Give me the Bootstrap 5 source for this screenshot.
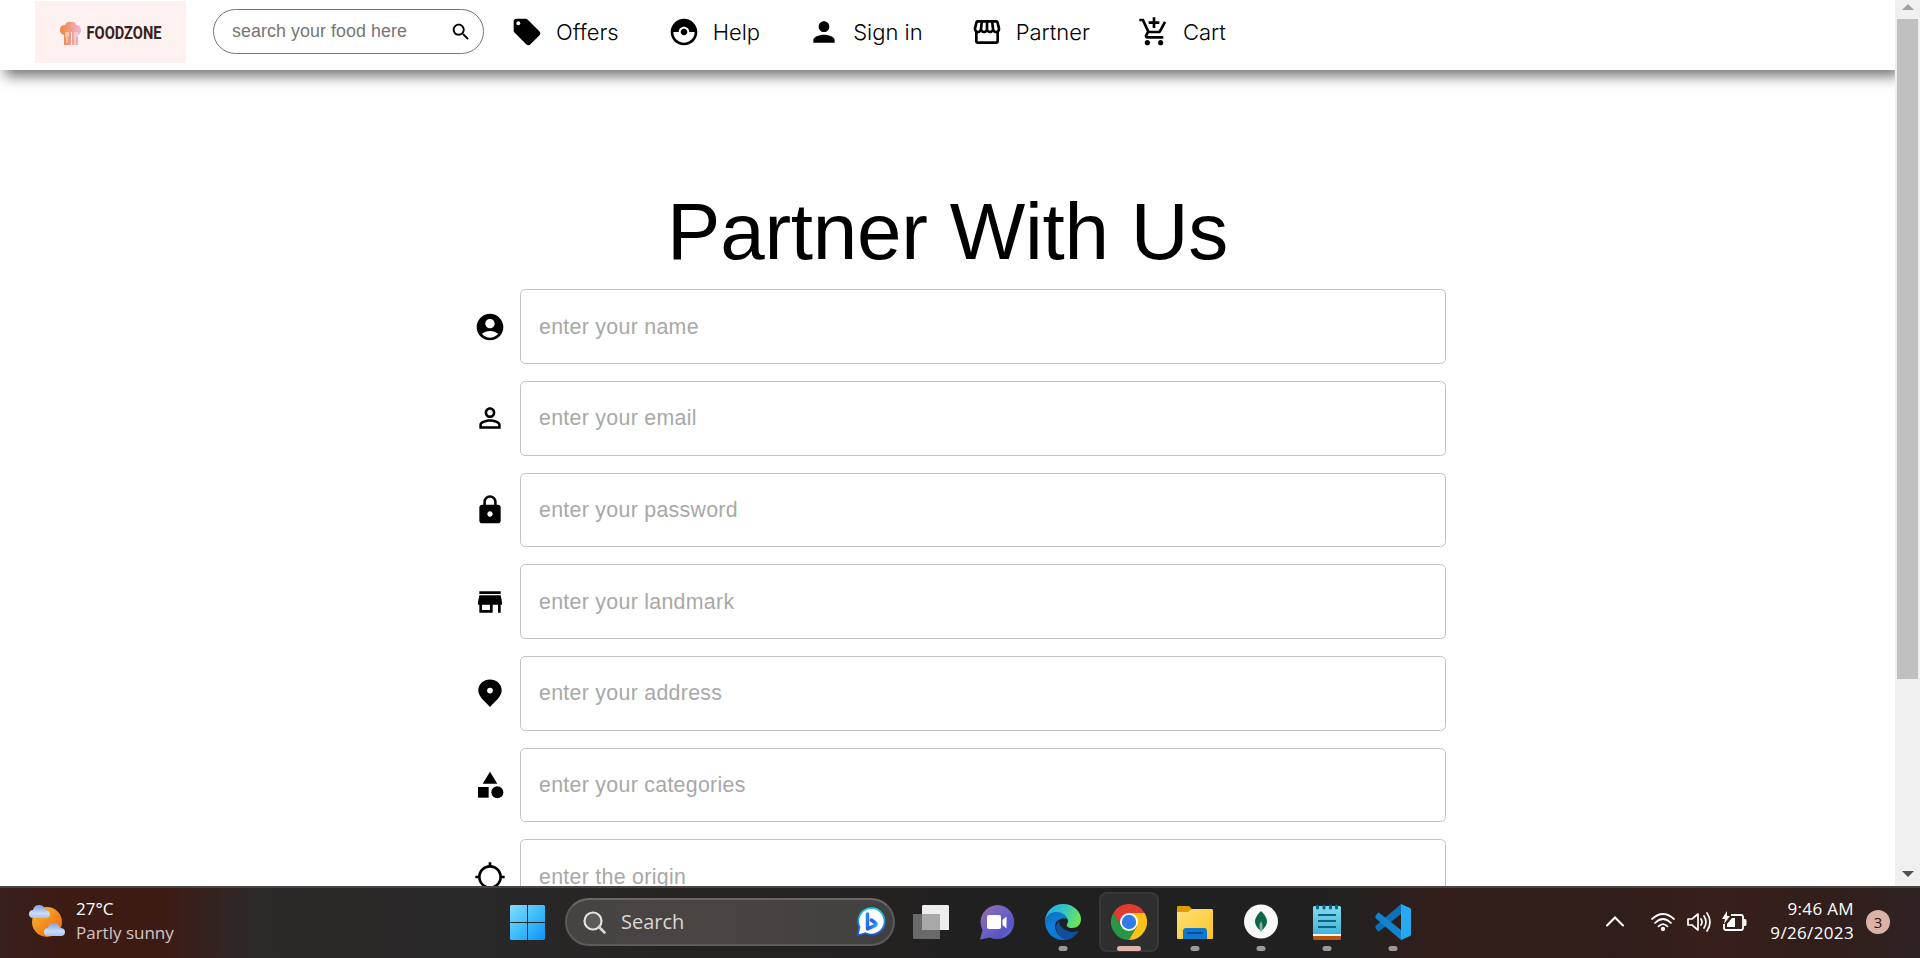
<!DOCTYPE html>
<html lang="en">
<head>
<meta charset="utf-8">
<meta name="viewport" content="width=device-width, initial-scale=1">
<title>FoodZone - Partner With Us</title>
<link href="https://cdn.jsdelivr.net/npm/bootstrap@5.3.0/dist/css/bootstrap.min.css" rel="stylesheet">
<style>
  body { font-family: "Liberation Sans", Arial, sans-serif; color: #000; background: #fff; height: 958px; }
  svg { display: block; flex: none; }
  .viewport-row { height: 886px; }
  .topbar { height: 70px; padding: 0 0 0 35px; box-shadow: 5px 6px 13px 0 #707070; background: #fff; }
  .brand-box { width: 151px; height: 62px; margin-top: 1px; background: #fdf2f0; }
  .food-search { width: 271px; height: 45px; margin: 9px 0 0 27px; border: 1px solid #767676; border-radius: 23px; padding: 0 11px 0 18px; }
  .food-search input { font-size: 17.78px; letter-spacing: .1px; line-height: 20px; color: #000; width: 200px; padding: 0 0 2px; outline: 0; }
  .food-search input::placeholder { color: #757575; opacity: 1; }
  .mainlink { height: 32px; margin: 16px 0 0 48px; color: #000; font: 300 22px/32px Inter, sans-serif; gap: 13px; text-decoration: none; }
  .food-search + .mainlink { margin-left: 27px; }
  .food-search + .mainlink + .mainlink { margin-left: 49px; }
  .mainlink svg, .field-row > svg { width: 32px; height: 32px; }
  .page-title { font-size: 80px; letter-spacing: -.25px; line-height: 96px; font-weight: 400; margin: 113.5px 0 9.85px; }
  .field-row { gap: 14px; margin-bottom: 17px; height: 74.67px; }
  .partner-form { width: 972px; margin-left: 474px; }
  .field-row .form-control { height: 100%; border: 1px solid #c0c0c0; border-radius: 5.33px; padding: 1px 18px 0; font-size: 21.33px; letter-spacing: .3px; }
  .field-row .form-control::placeholder { color: #a8a8a8; opacity: 1; }
  .scroll-track { width: 25px; background: #f0f0f0; padding: 4px 0 9px; }
  .scroll-thumb { width: 21px; height: 660px; background: #c0c0c0; margin-top: 9px; }
  .taskbar { height: 72px; padding-bottom: 2px; border-top: 2px solid #4b4342; font-family: "Open Sans", "Noto Sans", sans-serif; color: #fff;
    background: linear-gradient(90deg, #38201c 0, #3d1b15 60px, #3d1b15 165px, #2c2a29 255px, #292828 480px, #252322 700px, #212020 1000px, #222120 1350px, #321d1a 1440px, #301d1b 1620px, #381f1a 1710px, #311e1b 1820px, #2f2322 1920px); }
  .weather { width: 510px; padding: 0 0 2px 28px; gap: 11px; }
  .weather, .clock { font-size: 17px; line-height: 24px; }
  .weather .sky { color: #d2c6c4; }
  .task-search { width: 330px; height: 48px; margin-left: 20px; border: 2px solid #5d5a59; border-top-color: #6b6867; border-radius: 24px; background: linear-gradient(90deg, #454443, #4a4543 40%, #414040); padding: 0 7px 0 16px; font-size: 20px; color: #d8d6d5; }
  .task-apps { margin-left: 3px; }
  .task-app { width: 66px; height: 70px; }
  .task-app.active-app::before { content: ""; position: absolute; left: 3px; top: 5px; width: 60px; height: 60px; background: #2f2e2e; border: 2px solid #393838; border-radius: 8px; }
  .task-app svg { position: relative; }
  .run-dot { position: absolute; bottom: 6px; left: 50%; transform: translateX(-50%); width: 9px; height: 5px; border-radius: 3px; background: #9b9999; }
  .active-app .run-dot { width: 24px; background: #dfb3a8; }
  .tray { margin-left: auto; padding-right: 30px; }
  .clock { width: 107px; letter-spacing: .35px; padding-bottom: 2px; }
  .note-count { width: 24px; height: 24px; background: #dcb2a6; color: #201614; font-size: 15px; margin-left: 12px; }
</style>
</head>
<body class="overflow-hidden d-flex flex-column">
<div class="viewport-row d-flex flex-shrink-0 overflow-hidden">
  <div class="flex-grow-1 overflow-hidden">
    <nav class="topbar d-flex align-items-start">
      <a href="#" class="brand-box d-block" aria-label="Foodzone">
        <svg width="151" height="62" viewBox="0 0 151 62">
          <defs><linearGradient id="cap" x1="0" x2="1"><stop offset="0" stop-color="#ee8534"/><stop offset=".45" stop-color="#f09a80"/><stop offset="1" stop-color="#f0b6de"/></linearGradient></defs>
          <path fill="url(#cap)" d="M29 31q-4-1-4-5 0-5 5-5 2-4 6-3 4-1 5 3 5 0 5 5 0 4-3 5v10H29z" transform="translate(0 3)"/>
          <path d="M31 31v4q0 2 1 2v5M33 31v5M36.500 31v13M40 31v13M42 31v5" stroke="#fdebea" stroke-width="1" fill="none"/>
          <text x="51.500" y="38" textLength="75" lengthAdjust="spacingAndGlyphs" font-family="Roboto, sans-serif" font-size="19" font-weight="700" fill="#38201d">FOODZONE</text>
        </svg>
      </a>
      <form class="food-search d-flex align-items-center justify-content-between">
        <input type="text" class="border-0 bg-transparent" placeholder="search your food here">
        <svg width="22" height="22" viewBox="0 0 24 24"><path d="M15.500 14h-.79l-.28-.27C15.410 12.590 16 11.110 16 9.500 16 5.910 13.090 3 9.500 3S3 5.910 3 9.500 5.910 16 9.500 16c1.610 0 3.090-.59 4.230-1.570l.27.28v.79l5 4.990L20.490 19l-4.990-5zm-6 0C7.010 14 5 11.990 5 9.500S7.010 5 9.500 5 14 7.010 14 9.500 11.990 14 9.500 14z"/></svg>
      </form>
      <a href="#" class="mainlink d-flex"><svg viewBox="0 0 24 24"><path d="m21.410 11.580-9-9C12.050 2.220 11.550 2 11 2H4c-1.100 0-2 .9-2 2v7c0 .55.220 1.050.59 1.420l9 9c.36.360.86.580 1.410.58.550 0 1.050-.22 1.410-.59l7-7c.37-.36.590-.86.590-1.410 0-.55-.23-1.060-.59-1.420zM5.500 7C4.670 7 4 6.330 4 5.500S4.670 4 5.500 4 7 4.670 7 5.500 6.330 7 5.500 7z"/></svg>Offers</a>
      <a href="#" class="mainlink d-flex"><svg viewBox="0 0 24 24"><path d="M14.500 12c0 1.380-1.120 2.500-2.500 2.500S9.500 13.380 9.500 12s1.120-2.500 2.500-2.500 2.500 1.120 2.500 2.500zM22 12c0 5.520-4.480 10-10 10S2 17.520 2 12 6.480 2 12 2s10 4.480 10 10zm-2 0h-4c0-2.210-1.790-4-4-4s-4 1.790-4 4H4c0 4.410 3.590 8 8 8s8-3.590 8-8z"/></svg>Help</a>
      <a href="#" class="mainlink d-flex"><svg viewBox="0 0 24 24"><path d="M12 12c2.210 0 4-1.790 4-4s-1.790-4-4-4-4 1.790-4 4 1.790 4 4 4zm0 2c-2.670 0-8 1.340-8 4v2h16v-2c0-2.660-5.330-4-8-4z"/></svg>Sign in</a>
      <a href="#" class="mainlink d-flex"><svg viewBox="0 0 24 24"><path d="m21.900 8.890-1.050-4.370c-.22-.9-1-1.520-1.910-1.520H5.050c-.9 0-1.690.63-1.900 1.520L2.100 8.890c-.24 1.020-.02 2.060.62 2.880.8.110.190.190.280.290V19c0 1.100.9 2 2 2h14c1.100 0 2-.9 2-2v-6.940c.09-.09.200-.18.280-.28.640-.82.870-1.870.62-2.890zm-2.990-3.900 1.050 4.370c.1.420.010.840-.25 1.170-.14.180-.44.470-.94.470-.61 0-1.140-.49-1.210-1.140L16.980 5l1.930-.01zM13 5h1.960l.54 4.520c.5.390-.07.780-.33 1.070-.22.260-.54.410-.95.410-.67 0-1.220-.59-1.220-1.310V5zM8.490 9.520 9.040 5H11v4.690c0 .72-.55 1.310-1.290 1.310-.34 0-.65-.15-.89-.41-.25-.29-.37-.68-.33-1.070zm-4.450-.16L5.050 5h1.970l-.58 4.860c-.08.650-.6 1.140-1.210 1.140-.49 0-.8-.29-.93-.47-.27-.32-.36-.75-.26-1.170zM5 19v-6.030c.8.010.150.030.230.030.87 0 1.660-.36 2.240-.95.600.600 1.400.95 2.310.95.870 0 1.650-.36 2.230-.93.590.570 1.390.93 2.290.93.840 0 1.640-.35 2.240-.95.580.590 1.370.95 2.240.95.080 0 .15-.02.230-.03V19H5z"/></svg>Partner</a>
      <a href="#" class="mainlink d-flex"><svg viewBox="0 0 24 24"><path d="M11 9h2V6h3V4h-3V1h-2v3H8v2h3v3zm-4 9c-1.100 0-1.990.9-1.990 2S5.900 22 7 22s2-.9 2-2-.9-2-2-2zm10 0c-1.100 0-1.990.9-1.990 2s.89 2 1.990 2 2-.9 2-2-.9-2-2-2zm-9.830-3.250.03-.12.900-1.630h7.450c.75 0 1.410-.41 1.750-1.030l3.860-7.010L19.420 4h-.01l-1.100 2-2.760 5H8.530l-.13-.27L6.160 6l-.95-2-.94-2H1v2h2l3.600 7.590-1.350 2.450c-.16.280-.25.610-.25.960 0 1.100.9 2 2 2h12v-2H7.420c-.13 0-.25-.11-.25-.25z"/></svg>Cart</a>
    </nav>
    <main>
      <h1 class="page-title text-center">Partner With Us</h1>
      <form class="partner-form">
        <div class="field-row d-flex align-items-center"><svg viewBox="0 0 24 24"><path d="M12 2C6.480 2 2 6.480 2 12s4.480 10 10 10 10-4.480 10-10S17.520 2 12 2zm0 4c1.930 0 3.500 1.570 3.500 3.500S13.930 13 12 13s-3.500-1.570-3.500-3.500S10.070 6 12 6zm0 14c-2.030 0-4.430-.82-6.140-2.880C7.550 15.800 9.680 15 12 15s4.450.8 6.140 2.120C16.430 19.180 14.030 20 12 20z"/></svg><input class="form-control" type="text" placeholder="enter your name"></div>
        <div class="field-row d-flex align-items-center"><svg viewBox="0 0 24 24"><path d="M12 5.900c1.160 0 2.100.94 2.100 2.100s-.94 2.100-2.100 2.100S9.900 9.160 9.900 8s.94-2.100 2.100-2.100m0 9c2.970 0 6.100 1.460 6.100 2.100v1.100H5.900V17c0-.64 3.130-2.100 6.100-2.100M12 4C9.790 4 8 5.790 8 8s1.790 4 4 4 4-1.790 4-4-1.790-4-4-4zm0 9c-2.670 0-8 1.340-8 4v3h16v-3c0-2.660-5.330-4-8-4z"/></svg><input class="form-control" type="text" placeholder="enter your email"></div>
        <div class="field-row d-flex align-items-center"><svg viewBox="0 0 24 24"><path d="M18 8h-1V6c0-2.760-2.240-5-5-5S7 3.240 7 6v2H6c-1.100 0-2 .9-2 2v10c0 1.100.9 2 2 2h12c1.100 0 2-.9 2-2V10c0-1.100-.9-2-2-2zm-6 9c-1.100 0-2-.9-2-2s.9-2 2-2 2 .9 2 2-.9 2-2 2zm3.100-9H8.900V6c0-1.710 1.390-3.100 3.100-3.100 1.710 0 3.100 1.390 3.100 3.100v2z"/></svg><input class="form-control" type="text" placeholder="enter your password"></div>
        <div class="field-row d-flex align-items-center"><svg viewBox="0 0 24 24"><path d="M20 4H4v2h16V4zm1 10v-2l-1-5H4l-1 5v2h1v6h10v-6h4v6h2v-6h1zm-9 4H6v-4h6v4z"/></svg><input class="form-control" type="text" placeholder="enter your landmark"></div>
        <div class="field-row d-flex align-items-center"><svg viewBox="0 0 24 24"><path fill-rule="evenodd" d="M12 2C7.100 2 3 5.600 3 10.400c0 4 3.500 7.100 9 12.600 5.500-5.500 9-8.600 9-12.600C21 5.600 16.900 2 12 2zm0 6.200a2.200 2.200 0 1 1 0 4.400 2.200 2.200 0 0 1 0-4.400z" transform="translate(.3 0) scale(.975)"/></svg><input class="form-control" type="text" placeholder="enter your address"></div>
        <div class="field-row d-flex align-items-center"><svg viewBox="0 0 24 24"><path d="m12 2-5.500 9h11z"/><circle cx="17.500" cy="17.500" r="4.500"/><path d="M3 13.500h8v8H3z"/></svg><input class="form-control" type="text" placeholder="enter your categories"></div>
        <div class="field-row d-flex align-items-center"><svg viewBox="0 0 24 24"><path d="M20.940 11c-.46-4.170-3.770-7.480-7.940-7.940V1h-2v2.060C6.830 3.520 3.520 6.830 3.060 11H1v2h2.060c.46 4.170 3.770 7.480 7.940 7.940V23h2v-2.060c4.170-.46 7.480-3.770 7.940-7.940H23v-2h-2.060zM12 19c-3.870 0-7-3.130-7-7s3.130-7 7-7 7 3.130 7 7-3.130 7-7 7z"/></svg><input class="form-control" type="text" placeholder="enter the origin"></div>
      </form>
    </main>
  </div>
  <div class="scroll-track d-flex flex-column align-items-center flex-shrink-0">
    <svg width="12" height="6" viewBox="0 0 12 6"><path fill="#a0a0a0" d="M6 0l6 6H0z"/></svg>
    <div class="scroll-thumb"></div>
    <svg class="mt-auto" width="12" height="6" viewBox="0 0 12 6"><path fill="#505050" d="M6 6l6-6H0z"/></svg>
  </div>
</div>

<footer class="taskbar d-flex align-items-center flex-shrink-0">
  <div class="weather d-flex align-items-center">
    <svg width="37" height="35" viewBox="0 0 37 35">
      <defs><linearGradient id="sun" x1="0" y1="0" x2="1" y2="1"><stop offset=".1" stop-color="#f2b32c"/><stop offset=".85" stop-color="#f26d0f"/></linearGradient><linearGradient id="cloud" x1="0" y1="0" x2="0" y2="1"><stop offset="0" stop-color="#7fa0df"/><stop offset=".65" stop-color="#c9dcfa"/><stop offset="1" stop-color="#a8c2ef"/></linearGradient></defs>
      <circle cx="19" cy="18" r="15" fill="url(#sun)"/>
      <path fill="url(#cloud)" d="M5 14Q1 14 1 10q0-4 4-4 1-5 6-5 5 0 6 5 5 0 5 4 0 4-4 4z"/>
      <path fill="url(#cloud)" d="M20 32q-4 0-4-4 0-4 4-4 1-5 6-5 5 0 6 5 5 0 5 4 0 4-4 4z"/>
    </svg>
    <div><div>27°C</div><div class="sky">Partly sunny</div></div>
  </div>
  <svg width="35" height="35" viewBox="0 0 35 35"><defs><linearGradient id="win" x1="0" y1="0" x2="1" y2="1"><stop offset="0" stop-color="#84dcff"/><stop offset=".5" stop-color="#3fbdf8"/><stop offset="1" stop-color="#0c93f7"/></linearGradient></defs><path fill="url(#win)" d="M1 0h16v17H0V1zM18 0h16l1 1v16H18zM0 18h17v17H1l-1-1zM18 18h17v16l-1 1H18z"/></svg>
  <div class="task-search d-flex align-items-center">
    <svg width="23" height="23" viewBox="0 0 23 23"><circle cx="10" cy="10" r="8.500" fill="#5d5b5a" stroke="#e3e2e2" stroke-width="2.200"/><path d="M16 16l5.500 5.500" stroke="#d8d8d8" stroke-width="2.600" stroke-linecap="round"/></svg>
    <span style="margin-left:15px">Search</span>
    <svg class="ms-auto" width="30" height="30" viewBox="0 0 30 30"><defs><linearGradient id="bg" x1="0" y1="0" x2="0" y2="1"><stop offset="0" stop-color="#22cbe8"/><stop offset="1" stop-color="#1b51d0"/></linearGradient><linearGradient id="bb" x1="0" y1="0" x2="1" y2="1"><stop offset="0" stop-color="#2387f0"/><stop offset=".6" stop-color="#2560e8"/><stop offset="1" stop-color="#2ad0e0"/></linearGradient></defs><path d="M15.500 1.200a13.200 13.200 0 1 1-6 25L1.500 28.500 3.500 20A13.200 13.200 0 0 1 15.500 1.200z" fill="#fff" stroke="url(#bg)" stroke-width="1.800"/><path d="M11.500 7v15l8-3.600q1.500-1.400-.4-2.700L15.300 13" fill="none" stroke="url(#bb)" stroke-width="3.500" stroke-linejoin="round" stroke-linecap="round"/></svg>
  </div>
  <div class="task-apps d-flex">
    <div class="task-app position-relative d-flex align-items-center justify-content-center"><svg width="36" height="34" viewBox="0 0 36 34"><path fill="#ededed" d="M10 0h25l1 1v24H9V1z"/><path fill="#6a6969" d="M0 9h27v25H1l-1-1z"/><path fill="#a9a8a8" d="M9 9h18v16H9z"/></svg></div>
    <div class="task-app position-relative d-flex align-items-center justify-content-center"><svg width="35" height="35" viewBox="1 1 35 35"><defs><linearGradient id="chat" x1="0" y1="0" x2="1" y2="1"><stop offset="0" stop-color="#9d6ba8"/><stop offset=".45" stop-color="#6f62c4"/><stop offset=".75" stop-color="#5754c7"/><stop offset="1" stop-color="#6c7cea"/></linearGradient></defs><path fill="url(#chat)" d="M18 1a17 17 0 1 1-7 32.400L1 35.500 3.500 26A17 17 0 0 1 18 1z"/><rect x="8" y="11" width="14" height="14" rx="2" fill="#fff"/><path fill="#fff" d="M23.500 16l4-3.500v12l-4-3.500z"/></svg></div>
    <div class="task-app position-relative d-flex align-items-center justify-content-center"><svg width="36" height="36" viewBox="0 0 36 36"><defs><linearGradient id="e1" x1="0" y1=".2" x2="1" y2=".5"><stop offset="0" stop-color="#2aa9e8"/><stop offset=".5" stop-color="#31c7c4"/><stop offset="1" stop-color="#6fe357"/></linearGradient><linearGradient id="e2" x1="0" y1="0" x2=".5" y2="1"><stop offset="0" stop-color="#1266b2"/><stop offset=".5" stop-color="#0c82dc"/><stop offset="1" stop-color="#0f76cd"/></linearGradient></defs><path fill="url(#e1)" d="M0 17C1 6 9 0 18 0c11 0 18 8 18 15 0 6-4 9-9 9-4 0-6-2-5-4 2-2 1-6-2-8C13 8 4 9 0 17z"/><path fill="#11509e" d="M14 17c-3 3-3 6-3 7 1 7 7 12 11 12 5-1 9-5 12-9-2 0-6 2-11 0-6-2-9-6-9-10z"/><path fill="url(#e2)" d="M0 17C2 9 8 8 12 8c5 0 9 3 10 7-3-2-12 0-12 7 0 6 5 12 11 14-2 0-3 0-3 0C8 36 0 28 0 17z"/></svg><i class="run-dot"></i></div>
    <div class="task-app active-app position-relative d-flex align-items-center justify-content-center"><svg width="36" height="36" viewBox="0 0 36 36"><path fill="#e23b2f" d="M18 18V9h15.600A18 18 0 0 0 2.400 9l7.800 13.500z"/><path fill="#2a9746" d="M18 18l7.800 4.500L18 36A18 18 0 0 1 2.400 9l7.800 13.500z"/><path fill="#fbc116" d="M18 9h15.600A18 18 0 0 1 18 36l7.800-13.500z"/><circle cx="18" cy="18" r="9" fill="#fff"/><circle cx="18" cy="18" r="7.200" fill="#2f7bea"/></svg><i class="run-dot"></i></div>
    <div class="task-app position-relative d-flex align-items-center justify-content-center"><svg width="36" height="34" viewBox="0 0 36 34"><defs><linearGradient id="fold" x1="0" y1="0" x2="1" y2="1"><stop offset="0" stop-color="#ffe07a"/><stop offset="1" stop-color="#ffc425"/></linearGradient></defs><path fill="#dc9d00" d="M0 8V2q0-1 1-1h11l3 3v5z"/><path fill="url(#fold)" d="M0 7h11l4-3h20l1 1v28q0 1-1 1H1q-1 0-1-1z"/><path fill="#0f79cf" d="M6 34V26q0-3 3-3h18q3 0 3 3v8z"/><path stroke="#0a4d94" stroke-width="2" stroke-linecap="round" d="M11 28h14"/></svg><i class="run-dot"></i></div>
    <div class="task-app position-relative d-flex align-items-center justify-content-center"><svg width="34" height="36" viewBox="0 0 34 36"><circle cx="17" cy="17.500" r="17" fill="#f8f8f8"/><path fill="#0a6847" d="M17 7q12 11 0 20-12-9 0-20z"/><path fill="#8bb5a2" d="M17 17q3 5 0 12-3-7 0-12z"/></svg><i class="run-dot"></i></div>
    <div class="task-app position-relative d-flex align-items-center justify-content-center"><svg width="28" height="36" viewBox="0 0 28 36"><defs><linearGradient id="pad" x1="0" y1="0" x2="0" y2="1"><stop offset="0" stop-color="#81dcee"/><stop offset="1" stop-color="#42b3d6"/></linearGradient></defs><path fill="#b8560c" d="M0 30h28v5l-1 1H1l-1-1z"/><path fill="#f4f4f4" d="M0 28h28v4H0z"/><path fill="url(#pad)" d="M0 3l1-1h26l1 1v27H0z"/><path stroke="#0e6180" stroke-width="2" d="M5 11h18M5 17h18M5 23h18"/><path stroke="#0e6180" stroke-width="3" stroke-linecap="round" d="M4.500 2v2M11 2v2M17.500 2v2M23.500 2v2"/></svg><i class="run-dot"></i></div>
    <div class="task-app position-relative d-flex align-items-center justify-content-center"><svg width="36" height="36" viewBox="0 0 36 36"><path fill="#0a70b8" d="M1 24.500q-1.500-1.500 0-3L26 0v10L4.500 27q-1 1-2 0z"/><path fill="#1183cf" d="M1 11.500q-1.500 1.500 0 3L26 36V26L4.500 9q-1-1-2 0z"/><path fill="#27aaf2" d="M26 0l9 4q1 .5 1 2v24q0 1.500-1 2l-9 4z"/></svg><i class="run-dot"></i></div>
  </div>
  <div class="tray d-flex align-items-center">
    <svg width="18" height="12" viewBox="0 0 18 12" style="margin-right:27px"><path d="M1 9.500l8-8 8 8" fill="none" stroke="#fff" stroke-width="2" stroke-linecap="round"/></svg>
    <svg width="24" height="20" viewBox="0 0 24 20" style="margin-right:12px" fill="none" stroke="#fff" stroke-width="1.700" stroke-linecap="round"><path d="M1 7q11-10 22 0M4 11q8-8 16 0M7.500 14.300q4.500-4.500 9 0"/><circle cx="12" cy="17" r="1.300" fill="#fff"/></svg>
    <svg width="24" height="22" viewBox="0 0 24 22" style="margin-right:11px" fill="none" stroke="#fff" stroke-width="1.700" stroke-linecap="round" stroke-linejoin="round"><path d="M1 8v6h4l6 5V3L5 8zM14 8q2 3 0 6M17 5q4 6 0 12M20 2q6 9 0 18"/></svg>
    <svg width="25" height="22" viewBox="0 0 25 22"><path d="M9 4h10q2 0 2 2v11q0 2-2 2H4q-2 0-2-2v-4" fill="none" stroke="#fff" stroke-width="1.800"/><path fill="#fff" d="M22 8h1q1.500 0 1.500 1.500v4Q24.500 15 23 15h-1zM5 16v-3l5-6h3v9zM5 0L0 8h3l-1 5 6-8H5z"/></svg>
    <div class="clock text-end"><div>9:46 AM</div><div>9/26/2023</div></div>
    <span class="note-count rounded-circle d-flex align-items-center justify-content-center">3</span>
  </div>
</footer>
<script src="https://cdn.jsdelivr.net/npm/bootstrap@5.3.0/dist/js/bootstrap.bundle.min.js"></script>
</body>
</html>
